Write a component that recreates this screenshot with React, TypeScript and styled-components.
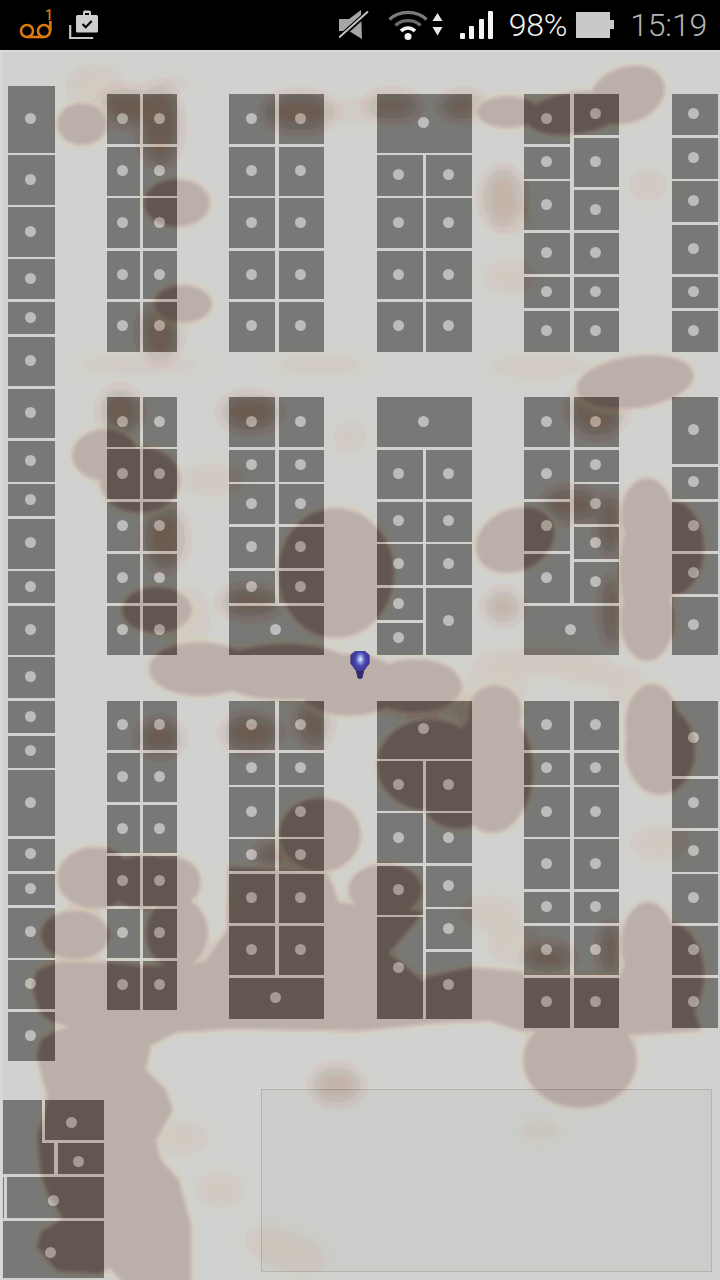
import React from "react";
import styled, { createGlobalStyle } from "styled-components";

const GAP = 2.5;

const Global = createGlobalStyle`
  html, body { margin: 0; padding: 0; background: #000; }
  #root { width: 720px; height: 1280px; overflow: hidden; }
`;

const Screen = styled.div`
  width: 720px;
  height: 1280px;
  display: flex;
  flex-direction: column;
  font-family: Roboto, "Liberation Sans", sans-serif;
`;

const StatusBar = styled.header`
  height: 50px;
  flex: none;
  background: #000;
  display: flex;
  align-items: center;
  justify-content: space-between;
  padding: 0 13px 0 19px;
`;

const StatusGroup = styled.div`
  display: flex;
  align-items: center;
`;

const Slot = styled.div<{ $gap: number }>`
  display: flex;
  align-items: center;
  margin-left: ${(p) => p.$gap}px;
`;

const StatusText = styled.span<{ $dim?: boolean }>`
  font-size: 32px;
  font-weight: 300;
  line-height: 50px;
  letter-spacing: -0.2px;
  color: ${(p) => (p.$dim ? "#b4b4b4" : "#f2f2f2")};
`;

const VoicemailWrap = styled.div`
  position: relative;
  width: 36px;
  height: 32px;
`;

const VoicemailCount = styled.span`
  position: absolute;
  left: 26px;
  top: -1px;
  font-size: 14px;
  line-height: 14px;
  font-weight: 500;
  color: #d9790e;
`;

const Floor = styled.main`
  position: relative;
  flex: 1;
  overflow: hidden;
  isolation: isolate;
  background: #d1d1d0;
  box-shadow: inset 2px 2px 0 #d9d9d9;
`;

const Rack = styled.div<{ $x: number; $y: number; $w: number }>`
  position: absolute;
  left: ${(p) => p.$x}px;
  top: ${(p) => p.$y}px;
  width: ${(p) => p.$w}px;
  display: flex;
  flex-direction: column;
  gap: ${GAP}px;
`;

const LaneRow = styled.div`
  display: flex;
  justify-content: space-between;
`;

const Lane = styled.div<{ $w: number }>`
  width: ${(p) => p.$w}px;
  display: flex;
  flex-direction: column;
  gap: ${GAP}px;
`;

const Bay = styled.div<{ $h: number }>`
  height: ${(p) => p.$h}px;
  flex: none;
  background: #787877;
  display: flex;
  align-items: center;
  justify-content: center;
`;

const Dot = styled.span`
  width: 11px;
  height: 11px;
  border-radius: 50%;
  background: #bcbcbb;
  transform: translate(-1px, -1px);
`;

const Cluster = styled.div`
  position: absolute;
  left: 3px;
  top: 1049.5px;
  width: 101px;
  display: grid;
  grid-template-columns: 38.5px 3.3px 9.4px 4px 45.8px;
  grid-template-rows: 40.7px 2.6px 31.6px 2.5px 41.6px 2.6px 57px;
`;

const Nook = styled.div<{ $area: string; $inset?: number }>`
  grid-area: ${(p) => p.$area};
  margin-left: ${(p) => p.$inset ?? 0}px;
  background: #787877;
  display: flex;
  align-items: center;
  justify-content: center;
  padding: 8px 3px 0 0;
`;

const Sliver = styled.div`
  grid-area: 5 / 1 / 6 / 2;
  width: 1.4px;
  background: #787877;
`;

const Panel = styled.div`
  position: absolute;
  left: 261px;
  top: 1039px;
  width: 449px;
  height: 181px;
  border: 1px solid rgba(120, 116, 108, 0.28);
  background: rgba(0, 0, 0, 0.022);
`;

const HeatLayer = styled.svg`
  position: absolute;
  left: 0;
  top: 0;
  width: 720px;
  height: 1230px;
  mix-blend-mode: difference;
  pointer-events: none;
`;

const Pin = styled.svg`
  position: absolute;
  left: 349px;
  top: 600px;
  width: 22px;
  height: 30px;
`;

const Icon = styled.svg`
  display: block;
`;

/* y values below are screen rows; each list holds bay tops, then the last bottom */
type Part = number[] | number[][];
type RackData = { x: number; w: number; lanes?: [number, number]; parts: Part[] };

const B1 = [94.3, 147, 198.3, 250.7, 302, 351.7];

const racks: RackData[] = [
  { x: 8, w: 46.6, parts: [[[85.7, 155.3, 207.3, 259.3, 302, 337, 389, 441, 484.3, 518.7, 571.3, 605.7, 657.3, 701, 735.7, 770.3, 838.7, 873.7, 908, 960.3, 1011.7, 1061.3]]] },
  { x: 107, w: 70, lanes: [33.2, 33.8], parts: [[B1, B1]] },
  { x: 107, w: 70, lanes: [33.2, 33.8], parts: [[[397.3, 449.3, 501.7, 553.7, 605.7, 654.7], [397.3, 449.3, 501.7, 553.7, 605.7, 654.7]]] },
  { x: 107, w: 70, lanes: [33.2, 33.8], parts: [[[701, 752.7, 805, 856, 908.7, 961, 1010], [701, 752.7, 805, 856, 908.7, 961, 1010]]] },
  { x: 229.3, w: 95, lanes: [46, 45.6], parts: [[B1, B1]] },
  { x: 229.3, w: 95, lanes: [46, 45.6], parts: [[[397.3, 449.7, 484.3, 527, 571, 603.2], [397.3, 449.7, 484.3, 527, 571, 603.2]], [605.7, 654.7]] },
  { x: 229.3, w: 95, lanes: [46, 45.6], parts: [[[701, 752.7, 787.3, 839.3, 873.7, 926, 975.2], [701, 752.7, 787.3, 839.3, 873.7, 926, 975.2]], [977.7, 1019.3]] },
  { x: 377, w: 95, lanes: [45.8, 46], parts: [[94.3, 152.8], [[155.3, 198.3, 250.7, 302, 351.7], [155.3, 198.3, 250.7, 302, 351.7]]] },
  { x: 377, w: 95, lanes: [45.8, 46], parts: [[397.3, 447.2], [[449.7, 501.7, 544.3, 588, 622.7, 654.7], [449.7, 501.7, 544.3, 588, 654.7]]] },
  { x: 377, w: 95, lanes: [45.8, 46], parts: [[701, 758.6], [[761, 813.3, 865.7, 917, 1019], [761, 813.3, 865.7, 909, 951.7, 1019]]] },
  { x: 524.4, w: 95, lanes: [46, 45.6], parts: [[[94.3, 147, 181.3, 232.7, 277, 311, 351.7], [94.3, 137.7, 189.7, 233, 277, 311, 351.7]]] },
  { x: 524.4, w: 95, lanes: [46, 45.6], parts: [[[397.3, 449.7, 501.7, 553.7, 603.2], [397.3, 449.7, 484.3, 527, 562, 603.2]], [605.7, 654.7]] },
  { x: 524.4, w: 95, lanes: [46, 45.6], parts: [[[701, 752.7, 787.3, 839.3, 892, 926, 977.7, 1028], [701, 752.7, 787.3, 839.3, 892, 926, 977.7, 1028]]] },
  { x: 672, w: 45.7, parts: [[[94.3, 137.7, 181.3, 224.7, 277, 311, 351.7]]] },
  { x: 672, w: 45.7, parts: [[[397.3, 466.7, 501.7, 553.7, 596.7, 654.7]]] },
  { x: 672, w: 45.7, parts: [[[701, 778.7, 830.7, 874.3, 926, 977.7, 1028]]] },
];

const isLanes = (p: Part): p is number[][] => Array.isArray(p[0]);

const heights = (b: number[]) =>
  b.slice(0, -1).map((t, i) => (i === b.length - 2 ? b[i + 1] - t : b[i + 1] - t - GAP));

const firstTop = (r: RackData) => {
  const p = r.parts[0];
  return isLanes(p) ? p[0][0] : p[0];
};

/* Heat map: hard-edged cores, their orange rim, soft patches and faint haze */
type E = [number, number, number, number, number?];

const core: E[] = [
  [82, 124, 24, 20], [177, 203, 32, 23], [183, 304, 28, 18],
  [508, 112, 30, 15], [575, 113, 48, 20, -8], [627, 95, 38, 27, -20],
  [635, 382, 58, 25, -8], [105, 455, 32, 25], [140, 480, 40, 32],
  [157, 610, 34, 22], [336, 573, 57, 64], [200, 669, 50, 26],
  [285, 672, 72, 27], [350, 685, 52, 30], [415, 686, 46, 26],
  [430, 765, 52, 45], [458, 792, 38, 36], [492, 770, 40, 62],
  [495, 712, 26, 26], [515, 540, 40, 30, -25],
  [647, 515, 25, 36], [647, 570, 27, 60], [647, 620, 26, 40],
  [672, 548, 31, 46], [652, 725, 26, 40], [660, 750, 34, 44], [95, 878, 37, 30],
  [75, 935, 33, 24], [145, 882, 38, 26], [170, 882, 30, 25],
  [177, 933, 30, 35], [320, 835, 40, 36], [385, 890, 36, 25],
  [580, 1060, 56, 47], [648, 945, 26, 42], [650, 990, 31, 42], [668, 975, 35, 52],
];

const mass =
  "33,985 38,971 60,962 105,963 145,967 180,965 205,962 228,930 229,868 325,872 332,885 338,903 360,905 377,905 423,912 412,925 388,953 423,982 426,978 472,968 520,972 525,977 640,977 690,1000 700,1030 620,1035 520,1030 490,1020 440,1022 360,1030 230,1028 175,1032 150,1045 145,1070 165,1090 172,1110 155,1140 160,1160 178,1180 190,1225 190,1290 130,1290 110,1267 100,1273 57,1270 38,1247 42,1232 58,1223 63,1217 50,1197 42,1175 38,1137 45,1115 48,1095 42,1075 38,1055 42,1040 55,1032 70,1027 55,1022 40,1012";

const soft: E[] = [
  [125, 106, 26, 18], [160, 125, 20, 42], [160, 332, 20, 30], [300, 112, 36, 18],
  [392, 106, 28, 13], [464, 106, 24, 13], [503, 198, 20, 30], [597, 410, 28, 26],
  [165, 538, 20, 32], [250, 602, 32, 14], [250, 412, 30, 18], [120, 412, 20, 24],
  [160, 738, 22, 18], [570, 505, 28, 16], [612, 525, 14, 30], [614, 610, 12, 36],
  [503, 607, 18, 16], [337, 1085, 25, 18], [251, 733, 28, 18], [314, 720, 16, 28],
  [548, 958, 26, 14], [612, 950, 12, 28], [298, 855, 44, 16], [425, 703, 46, 9], [468, 735, 10, 30],
];

const haze: E[] = [
  [95, 88, 30, 24], [355, 110, 36, 12], [210, 480, 38, 16], [510, 277, 28, 17],
  [540, 367, 60, 11], [648, 185, 20, 17], [350, 437, 17, 17], [220, 1190, 26, 18],
  [178, 1138, 32, 17], [285, 1250, 44, 20, 18], [490, 913, 32, 18], [515, 945, 28, 20],
  [660, 843, 32, 17], [540, 662, 74, 14], [490, 692, 40, 16], [640, 695, 34, 12],
  [600, 675, 44, 10], [140, 365, 74, 10], [320, 365, 54, 10], [190, 620, 20, 34],
  [540, 1130, 24, 10], [510, 218, 22, 17], [175, 85, 16, 10],
];

const Shapes = ({ list }: { list: E[] }) => (
  <>
    {list.map(([cx, cy, rx, ry, rot], i) => (
      <ellipse
        key={i}
        cx={cx}
        cy={cy - 50}
        rx={rx}
        ry={ry}
        transform={rot ? `rotate(${rot} ${cx} ${cy - 50})` : undefined}
      />
    ))}
  </>
);

const Heat = () => (
  <HeatLayer viewBox="0 0 720 1230">
    <defs>
      <filter id="b1" x="-20%" y="-20%" width="140%" height="140%"><feGaussianBlur stdDeviation="1.5" /></filter>
      <filter id="b3" x="-20%" y="-20%" width="140%" height="140%"><feGaussianBlur stdDeviation="4" /></filter>
      <filter id="b6" x="-60%" y="-60%" width="220%" height="220%"><feGaussianBlur stdDeviation="8" /></filter>
      <filter id="b8" x="-60%" y="-60%" width="220%" height="220%"><feGaussianBlur stdDeviation="10" /></filter>
      <g id="coreShapes">
        <Shapes list={core} />
        <polygon points={mass} transform="translate(0 -50)" />
      </g>
    </defs>
    <g filter="url(#b8)" fill="rgb(0,14,26)" opacity="0.6"><Shapes list={haze} /></g>
    <g filter="url(#b6)" fill="rgb(14,30,40)"><Shapes list={soft} /></g>
    <g filter="url(#b3)" fill="rgb(0,14,27)" stroke="rgb(0,14,27)" strokeWidth="6"><use href="#coreShapes" /></g>
    <g filter="url(#b1)" fill="rgb(21,34,40)"><use href="#coreShapes" /></g>
  </HeatLayer>
);

const MapPin = () => (
  <Pin viewBox="0 0 22 30">
    <defs>
      <radialGradient id="pinGlow" cx="0.52" cy="0.3" r="0.6">
        <stop offset="0" stopColor="#eef8ff" />
        <stop offset="0.14" stopColor="#a2b8ee" />
        <stop offset="0.42" stopColor="#4a48b0" />
        <stop offset="1" stopColor="#37287e" />
      </radialGradient>
    </defs>
    <path d="M6 1h10l4.600 4v8.500L15 21l-2 7.400H9L7 21 1.400 13.500V5z" fill="url(#pinGlow)" />
    <path d="M7 21h8l-2 7.400H9z" fill="#36286f" />
  </Pin>
);

const Voicemail = () => (
  <VoicemailWrap>
    <Icon width="36" height="32" viewBox="0 0 36 32">
      <g fill="none" stroke="#d9790e" strokeWidth="2.6">
        <circle cx="8" cy="22" r="6" />
        <circle cx="25" cy="22" r="6" />
        <path d="M8 28h17" />
        <path d="M31.400 12v10" />
      </g>
    </Icon>
    <VoicemailCount>1</VoicemailCount>
  </VoicemailWrap>
);

const Briefcase = () => (
  <Icon width="32" height="30" viewBox="0 0 32 30">
    <path d="M1.200 15v13h23" fill="none" stroke="#c6c6c6" strokeWidth="2.200" />
    <path d="M7 6.500a1.500 1.500 0 0 1 1.500-1.500H14V2.500a2 2 0 0 1 2-2h4a2 2 0 0 1 2 2V5h5.500A1.500 1.500 0 0 1 29 6.500V21a1.500 1.500 0 0 1-1.500 1.500h-19A1.500 1.500 0 0 1 7 21z" fill="#cfcfcf" />
    <path d="M16 3h4v2h-4z" fill="#000" />
    <path d="M13.500 14l3.200 3.200 6-6.200" fill="none" stroke="#000" strokeWidth="2" />
  </Icon>
);

const Mute = () => (
  <Icon width="30" height="30" viewBox="0 0 30 30">
    <path d="M0 9h10l12-9 1 29-13-8H0z" fill="#a6a6a6" />
    <path d="M0 28L29 2" stroke="#000" strokeWidth="5" />
    <path d="M0 27.500L29 1.500" stroke="#c4c4c4" strokeWidth="2" />
  </Icon>
);

const Wifi = () => (
  <Icon width="58" height="32" viewBox="0 0 58 32">
    <g fill="none" strokeWidth="3.400">
      <path d="M1.500 10.500C11 1 29 1 38.500 10.500" stroke="#7a7a7a" />
      <path d="M7.500 16.500C14 10 26 10 32.500 16.500" stroke="#6a6a6a" />
      <path d="M13 22c4-4 10-4 14 0" stroke="#f4f4f4" />
    </g>
    <circle cx="20" cy="27.500" r="3.500" fill="#f4f4f4" />
    <path d="M49.500 4l5 8h-10zM44.500 18h10l-5 8.500z" fill="#e8e8e8" />
  </Icon>
);

const Signal = () => (
  <Icon width="34" height="28" viewBox="0 0 34 28">
    {[[0, 22], [9, 15], [19, 8], [28, 0]].map(([x, y]) => (
      <rect key={x} x={x} y={y} width="5" height={28 - y} rx="1" fill="#f4f4f4" />
    ))}
  </Icon>
);

const Battery = () => (
  <Icon width="38" height="26" viewBox="0 0 38 26">
    <path d="M0 0h34v8h4v9h-4v9H0z" fill="#c9c9c9" />
  </Icon>
);

export default function App() {
  return (
    <Screen>
      <Global />
      <StatusBar>
        <StatusGroup>
          <Voicemail />
          <Slot $gap={14}><Briefcase /></Slot>
        </StatusGroup>
        <StatusGroup>
          <Mute />
          <Slot $gap={19}><Wifi /></Slot>
          <Slot $gap={14}><Signal /></Slot>
          <Slot $gap={15}><StatusText>98%</StatusText></Slot>
          <Slot $gap={9}><Battery /></Slot>
          <Slot $gap={16}><StatusText $dim>15:19</StatusText></Slot>
        </StatusGroup>
      </StatusBar>
      <Floor>
        {racks.map((r, i) => (
          <Rack key={i} $x={r.x} $y={firstTop(r) - 50} $w={r.w}>
            {r.parts.map((part, j) =>
              isLanes(part) ? (
                <LaneRow key={j}>
                  {part.map((lane, k) => (
                    <Lane key={k} $w={r.lanes ? r.lanes[k] : r.w}>
                      {heights(lane).map((h, m) => (
                        <Bay key={m} $h={h}><Dot /></Bay>
                      ))}
                    </Lane>
                  ))}
                </LaneRow>
              ) : (
                <Bay key={j} $h={part[1] - part[0]}><Dot /></Bay>
              )
            )}
          </Rack>
        ))}
        <Cluster>
          <Nook $area="1 / 1 / 4 / 2" />
          <Nook $area="3 / 1 / 4 / 4" />
          <Nook $area="1 / 3 / 2 / 6"><Dot /></Nook>
          <Nook $area="3 / 5 / 4 / 6"><Dot /></Nook>
          <Sliver />
          <Nook $area="5 / 1 / 6 / 6" $inset={4.4}><Dot /></Nook>
          <Nook $area="7 / 1 / 8 / 6"><Dot /></Nook>
        </Cluster>
        <Panel />
        <Heat />
        <MapPin />
      </Floor>
    </Screen>
  );
}
